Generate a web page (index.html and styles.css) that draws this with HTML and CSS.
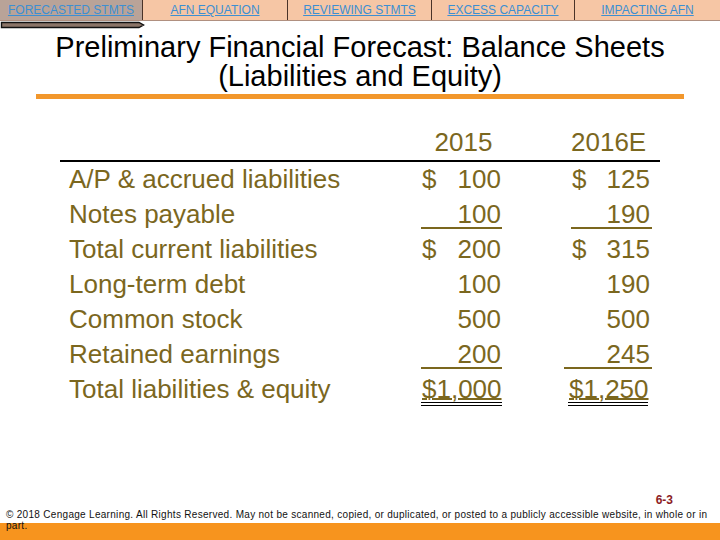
FILE: index.html
```html
<!DOCTYPE html>
<html>
<head>
<meta charset="utf-8">
<link rel="stylesheet" href="styles.css">
</head>
<body>
<div class="slide">
  <nav class="tabs">
    <div class="tab active"><a href="#">FORECASTED STMTS</a></div>
    <div class="tab t2"><a href="#">AFN EQUATION</a></div>
    <div class="tab t3"><a href="#">REVIEWING STMTS</a></div>
    <div class="tab t4"><a href="#">EXCESS CAPACITY</a></div>
    <div class="tab t5"><a href="#">IMPACTING AFN</a></div>
  </nav>
  <div class="marker">
    <svg width="146" height="8" viewBox="0 0 146 8"><polygon points="1.5,1.5 139,1.5 143.5,4 139,6.5 1.5,6.5" fill="#8b7467" stroke="#111" stroke-width="1.4"/></svg>
  </div>
  <h1 class="title">Preliminary Financial Forecast: Balance Sheets<br>(Liabilities and Equity)</h1>
  <div class="rule"></div>

  <div class="table">
    <div class="head">
      <div></div>
      <div class="h1">2015</div>
      <div></div>
      <div class="h2">2016E</div>
      <div></div>
    </div>
    <div class="body">
      <div class="c lab">A/P &amp; accrued liabilities</div>
      <div class="c n1"><span>$</span><span>100</span></div><div></div>
      <div class="c n2"><span>$</span><span>125</span></div><div></div>

      <div class="c lab">Notes payable</div>
      <div class="c n1 u"><span></span><span>100</span></div><div></div>
      <div class="c n2 u"><span></span><span>190</span></div><div></div>

      <div class="c lab">Total current liabilities</div>
      <div class="c n1"><span>$</span><span>200</span></div><div></div>
      <div class="c n2"><span>$</span><span>315</span></div><div></div>

      <div class="c lab">Long-term debt</div>
      <div class="c n1"><span></span><span>100</span></div><div></div>
      <div class="c n2"><span></span><span>190</span></div><div></div>

      <div class="c lab">Common stock</div>
      <div class="c n1"><span></span><span>500</span></div><div></div>
      <div class="c n2"><span></span><span>500</span></div><div></div>

      <div class="c lab">Retained earnings</div>
      <div class="c n1 u"><span></span><span>200</span></div><div></div>
      <div class="c n2 u wide"><span></span><span>245</span></div><div></div>

      <div class="c lab">Total liabilities &amp; equity</div>
      <div class="c n1 dbl"><span></span><span class="tu">$1,000</span></div><div></div>
      <div class="c n2 dbl d2"><span></span><span class="tu">$1,250</span></div><div></div>
    </div>
  </div>

  <footer class="footer">
    <div class="pagenum">6-3</div>
    <p class="copy">© 2018 Cengage Learning. All Rights Reserved. May not be scanned, copied, or duplicated, or posted to a publicly accessible website, in whole or in part.</p>
  </footer>
</div>
</body>
</html>
```
FILE: styles.css
```css
* { box-sizing: border-box; }
html, body { margin: 0; padding: 0; background: #fff; }
.slide {
  width: 720px;
  height: 540px;
  display: flex;
  flex-direction: column;
  overflow: hidden;
  font-family: "Liberation Sans", Arial, sans-serif;
}
.tabs {
  display: flex;
  height: 21px;
  background: #f6c6a5;
  border-bottom: 1px solid #b09080;
}
.tab {
  height: 20px;
  line-height: 20px;
  text-align: center;
  border-right: 1px solid #4a3328;
  font-size: 12px;
}
.tab a { color: #3c8fd2; text-decoration: underline; }
.tab.active { width: 143px; background: #b9a398; }
.t2 { width: 145px; }
.t3 { width: 144px; }
.t4 { width: 143px; }
.t5 { flex: 1; border-right: 0; }
.marker { height: 8px; line-height: 0; }
.marker svg { display: block; }
.title {
  margin: 4px 0 0;
  font-size: 29px;
  line-height: 29px;
  font-weight: normal;
  text-align: center;
  color: #000;
}
.rule {
  margin: 3px 0 0 36px;
  width: 648px;
  height: 5px;
  background: #f2972c;
}
.table {
  margin: 26px 0 0 60px;
  width: 600px;
  color: #7b671e;
  font-size: 26px;
}
.head {
  display: grid;
  grid-template-columns: 361px 81px 69px 81px 8px;
  height: 37px;
  line-height: 35px;
  border-bottom: 2px solid #000;
}
.h1 { text-align: center; padding-left: 4px; }
.h2 { text-align: center; padding-right: 7px; }
.body {
  display: grid;
  grid-template-columns: 361px 81px 69px 81px 8px;
}
.c {
  padding-top: 4px;
  line-height: 26px;
  height: 32px;
  border-bottom: 2px solid transparent;
  margin-bottom: 3px;
  white-space: nowrap;
}
.lab { padding-left: 9px; }
.n1, .n2 { display: flex; justify-content: space-between; }
.n1 { padding: 4px 1px 0 1px; }
.n2 { padding: 4px 2px 0 1px; }
.u { border-bottom-color: #7b671e; }
.wide { margin-left: -7px; padding-left: 8px; }
.dbl { height: 34px; border-bottom: 4px double #000; margin-bottom: 0; }
.d2 { margin-left: -3px; margin-right: 4px; }
.tu { text-decoration: underline; text-decoration-thickness: 2px; text-underline-offset: 0; }
.footer {
  margin-top: auto;
  background: linear-gradient(#fff 30px, #f7941e 30px);
  padding-bottom: 9px;
}
.pagenum {
  text-align: right;
  padding-right: 47px;
  font-size: 12px;
  line-height: 14px;
  font-weight: bold;
  color: #8c1c24;
}
.copy {
  margin: 2px 0 0;
  padding: 0 4px 0 6px;
  font-size: 10px;
  line-height: 11px;
  letter-spacing: 0.3px;
  color: #111;
}
```
